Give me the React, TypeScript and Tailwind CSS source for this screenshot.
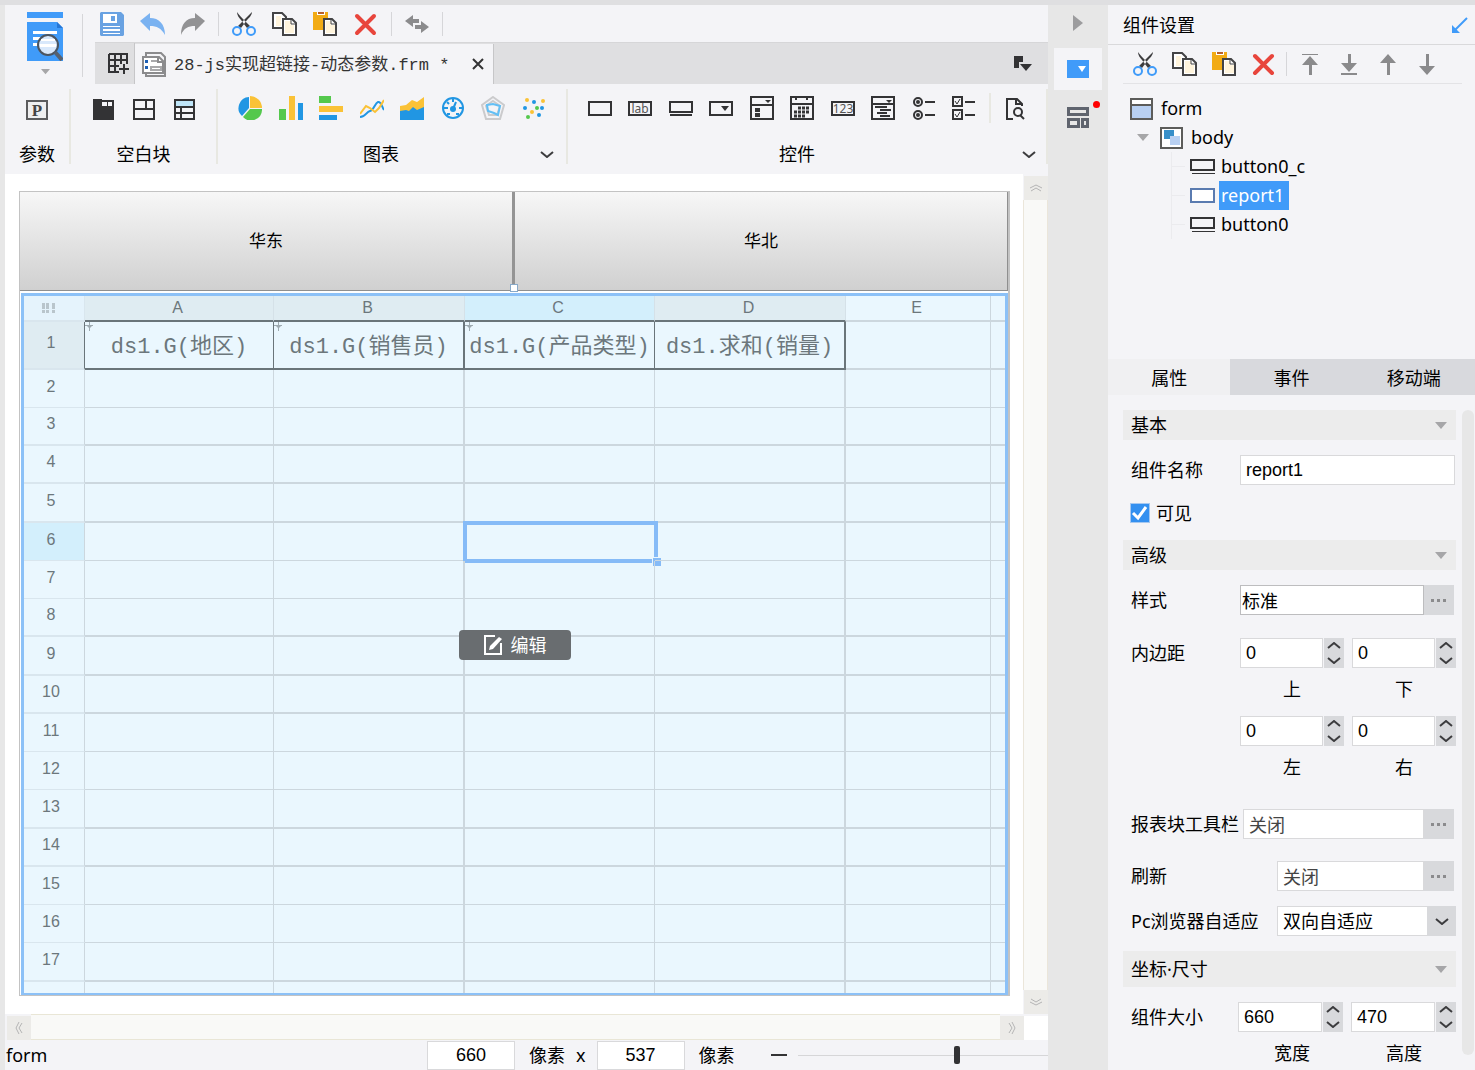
import { useState, type ReactNode } from "react";

const ui = "font-['Noto_Sans','Noto_Sans_CJK_SC',sans-serif]";
const song = "font-['Liberation_Mono','Noto_Sans_CJK_SC',monospace]";
const arial = "font-['Liberation_Sans','Noto_Sans_CJK_SC',sans-serif]";

function Svg({ w = 24, h = 24, children }: { w?: number; h?: number; children: ReactNode }) {
  return (
    <svg width={w} height={h} viewBox={`0 0 ${w} ${h}`} fill="none" className="block shrink-0" aria-hidden="true">
      {children}
    </svg>
  );
}

function IconButton({ label, children }: { label: string; children: ReactNode }) {
  return (
    <button type="button" aria-label={label} className="flex shrink-0 items-center justify-center">
      {children}
    </button>
  );
}

const VLine = ({ className = "" }: { className?: string }) => (
  <div className={`w-px shrink-0 bg-[#d6d6d9] ${className}`} />
);

/* ---------- edit icons ---------- */

const CutIcon = () => (
  <Svg>
    <path d="M5 0c0 3 2 6 4 8l6 8 3-2-5-5C10 6 7 3 5 0ZM20 0c0 3-3 6-5 8l-6 8-3-2 5-5c3-3 6-6 9-9Z" fill="#3c3c3e" />
    <circle cx="5" cy="19" r="4" stroke="#3f9bf9" strokeWidth="2" />
    <circle cx="19" cy="19" r="4" stroke="#3f9bf9" strokeWidth="2" />
  </Svg>
);

const CopyIcon = () => (
  <Svg w={25}>
    <path d="M1 1h9l4 4v11H1Z" fill="#fff" stroke="#444446" strokeWidth="2" />
    <path d="M4 4h5v10H4Z" fill="#fff4dc" />
    <path d="M11 7h9l4 4v12H11Z" fill="#fff" stroke="#444446" strokeWidth="2" />
    <path d="M13 9h6v4h3v8h-9Z" fill="#fff4dc" />
    <path d="M19 7v5h5" stroke="#444446" />
  </Svg>
);

const PasteIcon = () => (
  <Svg>
    <path d="M0 0h15v18H0Z" fill="#f2ab14" />
    <path d="M4 0h8v3H4Z" fill="#fff" />
    <path d="M5 0h6v2H5Z" fill="#b8602a" />
    <path d="M11 7h8l4 4v12H11Z" fill="#fff" stroke="#444446" strokeWidth="2" />
    <path d="M13 9h5v4h4v8h-9Z" fill="#fff4dc" />
    <path d="M18 7v5h5" stroke="#444446" />
  </Svg>
);

const DeleteIcon = () => (
  <Svg w={25}>
    <path d="M4 4l17 17M21 4L4 21" stroke="#e8453c" strokeWidth="4" strokeLinecap="round" />
  </Svg>
);

const Chevron = ({ up = false }: { up?: boolean }) => (
  <Svg w={14} h={7}>
    <path d={up ? "M1 6l6-5 6 5" : "M1 1l6 5 6-5"} stroke="#3c3c3e" strokeWidth="2" />
  </Svg>
);

const Caret = ({ w = 12 }: { w?: number }) => (
  <svg width={w} height="7" viewBox="0 0 12 7" className="block shrink-0" aria-hidden="true">
    <path d="M0 0h12L6 7Z" fill="#a6a6a8" />
  </svg>
);

/* ---------- header ---------- */

function Logo() {
  return (
    <div className="flex w-[90px] shrink-0 items-start">
      <button type="button" aria-label="模板" className="ml-[22px] mt-[7px] flex flex-col items-center gap-[7px]">
        <Svg w={36} h={49}>
          <path d="M0 0h36v6H0ZM0 10h30l6 6v33H0Z" fill="#409bf9" />
          <path d="M30 10l6 6h-6Z" fill="#2677d6" />
          <path d="M6 19h24v3H6ZM6 25h8v3H6ZM6 31h5v3H6Z" fill="#fff" />
          <circle cx="21" cy="33" r="10" fill="#d8e8fb" stroke="#4c5560" strokeWidth="2" />
          <path d="M14 27h14v2H14ZM13 32h16v3H13Z" fill="#fff" />
          <path d="M28 40l7 8" stroke="#566170" strokeWidth="4" />
        </Svg>
        <Caret w={9} />
      </button>
      <VLine className="ml-[19px] mt-[9px] h-[63px]" />
    </div>
  );
}

function EditBar() {
  return (
    <div className="flex h-[37px] items-center pl-[5px]">
      <div className="flex items-center gap-4">
        <IconButton label="保存">
          <Svg>
            <path d="M1 0h20l3 3v20l-1 1H1l-1-1V1Z" fill="#69a2e2" />
            <path d="M3 2h14v9H3ZM3 14h17v1H3ZM3 17h17v2H3ZM3 21h17v1H3Z" fill="#fff" />
            <path d="M11 4h4v5h-4Z" fill="#69a2e2" />
          </Svg>
        </IconButton>
        <IconButton label="撤销">
          <Svg w={25}>
            <path d="M0 9L10 1v5c9 0 15 6 15 17-4-7-8-9-15-9v5Z" fill="#7ab2f1" />
          </Svg>
        </IconButton>
        <IconButton label="重做">
          <Svg>
            <path d="M24 9L14 1v5C5 6 0 12 0 23c3-7 7-9 14-9v5Z" fill="#929294" />
          </Svg>
        </IconButton>
      </div>
      <VLine className="mx-[13px] h-6" />
      <div className="flex items-center gap-4">
        <IconButton label="剪切"><CutIcon /></IconButton>
        <IconButton label="复制"><CopyIcon /></IconButton>
        <IconButton label="粘贴"><PasteIcon /></IconButton>
        <IconButton label="删除"><DeleteIcon /></IconButton>
      </div>
      <VLine className="mx-[13px] h-6" />
      <IconButton label="切换">
        <Svg>
          <path d="M0 9l8-6v4h6v4H8v4Z" fill="#8b8b8d" />
          <path d="M24 15l-8-6v4h-6v4h6v4Z" fill="#8b8b8d" />
        </Svg>
      </IconButton>
      <VLine className="ml-[13px] h-6" />
    </div>
  );
}

function FileTabs() {
  return (
    <div className="flex h-[42px] items-stretch border-t border-[#d6d6d8] bg-[#dfdfe1]">
      <button type="button" aria-label="新建" className="flex w-10 items-center justify-end border-r border-[#c6c6c8] pr-1">
        <Svg w={22} h={22}>
          <path d="M1 1h18v10M1 1v18h10M1 7h18M1 13h10M7 1v18M13 1v10M11 16h10M16 11v10" stroke="#333335" strokeWidth="2" />
        </Svg>
      </button>
      <div className="mt-px flex w-[359px] items-center border-r border-[#c6c6c8] bg-[#f4f4f7] pl-[7px]">
        <Svg w={24} h={25}>
          <path d="M4 1h15l4 4v19H4Z" fill="#f4f4f7" stroke="#8b8b8d" strokeWidth="2" />
          <path d="M1 5h16l4 4v12H1Z" fill="#fff" stroke="#8b8b8d" strokeWidth="2" />
          <path d="M3 8h3v3H3ZM3 14h3v3H3Z" fill="#1d5fb4" />
          <path d="M9 9h6M9 15h10v3H9Z" stroke="#a8a8aa" strokeWidth="2" />
          <path d="M16 4v6h6" stroke="#8b8b8d" strokeWidth="2" />
        </Svg>
        <span className={`ml-2 whitespace-pre pt-[3px] text-[17px] text-[#333] ${song}`}>28-js实现超链接-动态参数.frm *</span>
        <button type="button" aria-label="关闭标签" className="ml-auto mr-[9px]">
          <Svg w={12} h={12}>
            <path d="M1 1l10 10M11 1L1 11" stroke="#333335" strokeWidth="2" />
          </Svg>
        </button>
      </div>
      <button type="button" aria-label="标签列表" className="ml-auto mr-4 flex items-center">
        <Svg w={18} h={15}>
          <path d="M0 0h9v6H5v6H0Z" fill="#333335" />
          <path d="M6 8h12l-6 7Z" fill="#333335" />
        </Svg>
      </button>
    </div>
  );
}

/* ---------- ribbon ---------- */

const blockIcons = [
  {
    name: "Tab块",
    icon: <path d="M2 3h9v1h12v20H2ZM11 6v4h5V6ZM17 6v4h4V6Z" fill="#333335" fillRule="evenodd" />,
  },
  {
    name: "绝对画布块",
    icon: <path d="M2 4h20v19H2ZM2 13h20M14 4v9" stroke="#333335" strokeWidth="2" />,
  },
  {
    name: "报表块",
    icon: (
      <>
        <path d="M3 4h19v6H3Z" fill="#bfe5f8" />
        <path d="M3 4h19v19H3ZM3 11h19M3 17h19M9 11v12" stroke="#333335" strokeWidth="2" />
      </>
    ),
  },
];

const chartIcons = [
  {
    name: "饼图",
    icon: (
      <>
        <path d="M11 12V1A11 11 0 0 0 4 20Z" fill="#2196e3" />
        <path d="M12 12V0a12 12 0 0 1 12 12Z" fill="#fac237" />
        <path d="M12 13h12A11 11 0 0 1 5 21Z" fill="#54c84d" />
      </>
    ),
  },
  {
    name: "柱形图",
    icon: (
      <>
        <path d="M0 13h7v12H0Z" fill="#54c84d" />
        <path d="M10 0h6v24h-6Z" fill="#fac237" />
        <path d="M19 7h5v17h-5Z" fill="#2196e3" />
      </>
    ),
  },
  {
    name: "条形图",
    icon: (
      <>
        <path d="M0 0h12v7H0Z" fill="#54c84d" />
        <path d="M0 10h24v6H0Z" fill="#fac237" />
        <path d="M0 19h18v5H0Z" fill="#2196e3" />
      </>
    ),
  },
  {
    name: "折线图",
    icon: (
      <>
        <path d="M0 21c6 0 6-5 10-6s5-8 8-9 4 5 6 8" stroke="#2196e3" strokeWidth="2" />
        <path d="M0 18l6-8 4 2 5 4 4-4 5-8" stroke="#fac237" strokeWidth="2" />
      </>
    ),
  },
  {
    name: "面积图",
    icon: (
      <>
        <path d="M0 10l6-1 6-5 5 2 7-5v16H0Z" fill="#fac237" />
        <path d="M0 15l6-1 3 1 4-4 4 3 7-3v13H0Z" fill="#2196e3" />
      </>
    ),
  },
  {
    name: "仪表盘",
    icon: (
      <>
        <circle cx="12" cy="12" r="10" stroke="#2196e3" strokeWidth="2" />
        <path d="M12 3v3M3 12h4M18 12h3M6 6l2 2M6 18h3M18 18h-3" stroke="#2196e3" strokeWidth="2" />
        <circle cx="12" cy="13" r="3" fill="#2196e3" />
        <path d="M12 13l3-7" stroke="#2196e3" strokeWidth="2" />
      </>
    ),
  },
  {
    name: "雷达图",
    icon: (
      <>
        <path d="M12 1l11 8-4 14H5L1 9ZM12 5l7 5-3 9H8L5 10Z" stroke="#cbcbcd" strokeWidth="2" />
        <path d="M6 9l6-1 7 2-2 9-4-2-6-2Z" stroke="#62bff5" strokeWidth="2" />
      </>
    ),
  },
  {
    name: "散点图",
    icon: (
      <>
        <g fill="#fac237">
          <circle cx="5" cy="4" r="2" />
          <circle cx="21" cy="5" r="2" />
          <circle cx="10" cy="16" r="2" />
        </g>
        <g fill="#2196e3">
          <circle cx="12" cy="6" r="2" />
          <circle cx="3" cy="12" r="2" />
          <circle cx="20" cy="12" r="2" />
          <circle cx="17" cy="19" r="2" />
        </g>
        <g fill="#54c84d">
          <circle cx="15" cy="12" r="2" />
          <circle cx="6" cy="21" r="2" />
        </g>
      </>
    ),
  },
];

const dark = { stroke: "#333335", strokeWidth: 2 };

const widgetIcons = [
  { name: "文本", icon: <path d="M1 6h22v13H1Z" {...dark} /> },
  {
    name: "标签",
    icon: (
      <>
        <path d="M1 6h22v13H1Z" {...dark} />
        <text x="12" y="17" textAnchor="middle" fontSize="12" fontFamily="Noto Sans" fill="#555">lab</text>
      </>
    ),
  },
  { name: "按钮", icon: <path d="M1 6h22v10H1ZM1 19h22" {...dark} /> },
  {
    name: "下拉框",
    icon: (
      <>
        <path d="M1 6h22v13H1Z" {...dark} />
        <path d="M12 10h8l-4 5Z" fill="#333335" />
      </>
    ),
  },
  {
    name: "下拉复选框",
    icon: (
      <>
        <path d="M1 1h22v22H1ZM1 9h22M6 13h3v2H6ZM6 18h3v2H6Z" {...dark} />
        <path d="M15 4h6l-3 3Z" fill="#333335" />
      </>
    ),
  },
  {
    name: "日期",
    icon: (
      <>
        <path d="M1 1h22v22H1ZM1 8h22M6 1v3M17 1v3" {...dark} />
        <path d="M8 12h12M4 16h16M4 20h12" stroke="#333335" strokeWidth="3" strokeDasharray="3 1" />
      </>
    ),
  },
  {
    name: "数字",
    icon: (
      <>
        <path d="M1 6h22v13H1Z" {...dark} />
        <text x="12" y="17" textAnchor="middle" fontSize="12" fontFamily="Noto Sans" fill="#555">123</text>
      </>
    ),
  },
  {
    name: "下拉树",
    icon: (
      <>
        <path d="M1 1h22v22H1ZM1 8h22M4 11h12M9 14h11M6 17h10M9 20h10" {...dark} />
        <path d="M15 4h6l-3 3Z" fill="#333335" />
      </>
    ),
  },
  {
    name: "单选按钮组",
    icon: (
      <>
        <path d="M13 6h10M13 19h10" {...dark} />
        <circle cx="6" cy="6" r="4" {...dark} />
        <circle cx="6" cy="19" r="4" {...dark} />
        <circle cx="6" cy="6" r="2" fill="#333335" />
        <circle cx="6" cy="19" r="2" fill="#333335" />
      </>
    ),
  },
  {
    name: "复选框组",
    icon: (
      <>
        <path d="M1 1h9v9H1ZM1 14h9v9H1ZM13 6h10M13 19h10" {...dark} />
        <path d="M3 5l2 3 3-5M3 18l2 3 3-5" stroke="#333335" />
      </>
    ),
  },
];

function IconRow({ items }: { items: { name: string; icon: ReactNode }[] }) {
  return (
    <div className="flex h-6 justify-between">
      {items.map((item) => (
        <IconButton key={item.name} label={item.name}>
          <Svg>{item.icon}</Svg>
        </IconButton>
      ))}
    </div>
  );
}

const GroupLine = () => <div className="mt-[5px] h-[75px] w-[2px] shrink-0 bg-[#e8e8e2]" />;

function Ribbon() {
  return (
    <div className="flex h-[90px] shrink-0 text-lg leading-6 text-black">
      <div className="flex w-16 shrink-0 flex-col items-center gap-[22px] pt-3">
        <IconButton label="参数面板">
          <Svg w={22}>
            <path d="M1 5h20v18H1Z" fill="#efeff0" stroke="#5c5c5e" strokeWidth="2" />
            <text x="11" y="20" textAnchor="middle" fontSize="17" fontWeight="bold" fontFamily="Liberation Serif" fill="#444">P</text>
          </Svg>
        </IconButton>
        <span>参数</span>
      </div>
      <GroupLine />
      <div className="flex w-[145px] shrink-0 flex-col gap-[22px] px-5 pt-3">
        <IconRow items={blockIcons} />
        <span className="text-center">空白块</span>
      </div>
      <GroupLine />
      <div className="flex w-[348px] shrink-0 flex-col gap-[22px] px-5 pt-3">
        <IconRow items={chartIcons} />
        <div className="flex items-center">
          <span className="flex-1 pr-4 text-center">图表</span>
          <button type="button" aria-label="更多图表" className="-mr-2"><Chevron /></button>
        </div>
      </div>
      <GroupLine />
      <div className="flex flex-1 flex-col gap-[22px] pl-5 pr-[10px] pt-3">
        <div className="flex">
          <div className="w-[388px]">
            <IconRow items={widgetIcons} />
          </div>
          <div className="mx-[13px] -my-[3px] h-[30px] w-[2px] bg-[#e8e8e2]" />
          <IconButton label="预览">
            <Svg>
              <path d="M9 23H3V3h10l5 5v2M12 3v5h6" {...dark} />
              <circle cx="14" cy="16" r="4" {...dark} />
              <path d="M16 19l4 4" {...dark} />
            </Svg>
          </IconButton>
        </div>
        <div className="flex items-center">
          <span className="flex-1 pr-4 text-center">控件</span>
          <button type="button" aria-label="更多控件"><Chevron /></button>
        </div>
      </div>
      <GroupLine />
    </div>
  );
}

/* ---------- design canvas ---------- */

const formulas = ["ds1.G(地区)", "ds1.G(销售员)", "ds1.G(产品类型)", "ds1.求和(销量)"];
const rows = Array.from({ length: 16 }, (_, i) => i + 2);
const thickRows = [3, 4, 5, 8, 9, 10, 13, 14, 17];
const cols = ["A", "B", "C", "D", "E"];

function ReportGrid() {
  return (
    <table className={`w-full table-fixed border-separate border-spacing-0 bg-[#eaf7fe] text-base leading-5 text-[#6c777c] ${arial}`}>
      <colgroup>
        <col className="w-[61px]" />
        <col className="w-[189px]" />
        <col className="w-[191px]" />
        <col className="w-[190px]" />
        <col className="w-[191px]" />
        <col className="w-[145px]" />
        <col />
      </colgroup>
      <thead>
        <tr className="h-[26px]">
          <td className="border-b-2 border-r border-[#d9e6ee] bg-[#e5f3fc] p-0">
            <div className="flex justify-center pr-3">
              <Svg w={13} h={10}>
                <path d="M0 0h3v6H0ZM4 0h3v6H4ZM10 0h3v6h-3ZM0 7h3v3H0ZM4 7h3v3H4ZM10 7h3v3h-3Z" fill="#b9c5cc" />
              </Svg>
            </div>
          </td>
          {cols.map((c) => (
            <th
              key={c}
              scope="col"
              className={`border-b-2 border-r p-0 pr-[3px] font-normal ${
                c === "E" ? "border-[#ccd7de]" : "border-b-[#6a757a] border-r-[#d5e1e8]"
              } ${c === "C" ? "bg-[#d3effc]" : c === "E" ? "bg-[#eaf7fe]" : "bg-[#dfecf2]"}`}
            >
              {c}
            </th>
          ))}
          <td className="border-b-2 border-[#ccd7de] p-0" />
        </tr>
      </thead>
      <tbody>
        <tr className="h-12">
          <th scope="row" className="border-b-2 border-r border-b-[#d9e6ee] border-r-[#6a757a] bg-[#dfecf2] p-0 pb-1 pr-[6px] font-normal">
            1
          </th>
          {formulas.map((f, i) => (
            <td
              key={f}
              className={`relative border-b-2 border-[#6a757a] p-0 pt-[5px] text-center ${i % 2 ? "border-r-2" : "border-r"}`}
            >
              {i < 3 && (
                <span className="absolute left-0 top-0">
                  <Svg w={9} h={9}>
                    <path d="M4 0h1v3h3v1H7L5 6v3H4V6L2 4H0V3h4Z" fill="#9fabb1" />
                  </Svg>
                </span>
              )}
              <span className={`whitespace-nowrap text-[22px] leading-[30px] ${song}`}>{f}</span>
            </td>
          ))}
          <td className="border-b-2 border-r border-[#ccd7de] p-0" />
          <td className="border-b-2 border-[#ccd7de] p-0" />
        </tr>
        {rows.map((n) => {
          const line = thickRows.includes(n) ? "border-b-2" : "border-b";
          return (
            <tr key={n} className={n % 4 === 1 ? "h-[39px]" : "h-[38px]"}>
              <th
                scope="row"
                className={`border-r border-b-[#d9e6ee] border-r-[#ccd7de] p-0 pb-1 pr-[6px] font-normal ${line} ${n === 6 ? "bg-[#d3effc]" : ""}`}
              >
                {n}
              </th>
              {cols.map((c) => (
                <td key={c} className={`relative border-[#ccd7de] p-0 ${line} ${c === "B" || c === "D" ? "border-r-2" : "border-r"}`}>
                  {c === "C" && n === 6 && (
                    <div className="absolute -bottom-[3px] -left-[2px] -right-[4px] -top-[2px] border-4 border-[#86bbf7]">
                      <div className="absolute -bottom-[7px] -right-[7px] box-content h-2 w-2 border-l border-t border-[#eaf7fe] bg-[#86bbf7]" />
                    </div>
                  )}
                </td>
              ))}
              <td className={`border-[#ccd7de] p-0 ${line}`} />
            </tr>
          );
        })}
        <tr className="h-[11px]">
          <td className="border-r border-[#ccd7de] p-0" />
          {cols.map((c) => (
            <td key={c} className={`border-[#ccd7de] p-0 ${c === "B" || c === "D" ? "border-r-2" : "border-r"}`} />
          ))}
          <td className="p-0" />
        </tr>
      </tbody>
    </table>
  );
}

function Canvas() {
  const face = "flex flex-1 items-center justify-center bg-linear-to-b from-[#f7f7f7] to-[#d0d0d0] pt-1";
  return (
    <div className="min-w-0 flex-1 overflow-hidden bg-white py-[17px] pl-[14px] pr-[13px]">
      <div className="border border-r-2 border-[#c3c3c3]">
        <div className={`relative flex h-[99px] border-b border-r border-[#8f8f8f] text-[17px] text-black ${song}`}>
          <button type="button" className={`${face} border-r-[3px] border-[#949494]`}>华东</button>
          <button type="button" className={face}>华北</button>
          <span className="absolute -bottom-[2px] left-1/2 h-2 w-2 -translate-x-1/2 border border-[#88a9c8] bg-white" />
        </div>
        <div className="relative mt-[2px] ml-px border-[3px] border-b-2 border-[#8cc1f7]">
          <ReportGrid />
          <button
            type="button"
            className="absolute left-1/2 top-1/2 flex h-[30px] w-28 -translate-x-1/2 -translate-y-1/2 items-center justify-center gap-2 rounded-sm bg-[#696d70] text-lg text-white"
          >
            <Svg w={20} h={22}>
              <path d="M12 2H2v18h16V9" stroke="#fff" strokeWidth="2" />
              <path d="M6 16l1-4 9-9 3 2-9 10Z" fill="#fff" />
            </Svg>
            编辑
          </button>
        </div>
      </div>
    </div>
  );
}

const ScrollButton = ({ label, turn }: { label: string; turn: string }) => (
  <button type="button" aria-label={label} className="flex h-6 w-6 shrink-0 items-center justify-center bg-[#ecebe8]">
    <span className={turn}>
      <Svg w={14} h={8}>
        <path d="M1 4l6-3 6 3M2 7l5-3 5 3" stroke="#b4b4b4" />
      </Svg>
    </span>
  </button>
);

const sizeInput = `h-[29px] w-[88px] border border-[#d9d9db] bg-white text-center text-lg text-black ${arial}`;

function StatusBar() {
  return (
    <div className="flex h-[30px] shrink-0 items-center text-lg text-black">
      <span className="w-[422px] shrink-0 pl-px">form</span>
      <input aria-label="画布宽度" defaultValue="660" className={sizeInput} />
      <span className="ml-[14px]">像素</span>
      <span className="mx-[11px]">x</span>
      <input aria-label="画布高度" defaultValue="537" className={sizeInput} />
      <span className="ml-[14px]">像素</span>
      <button type="button" aria-label="缩小" className="ml-9 mr-[11px]">
        <Svg w={16} h={2}>
          <path d="M0 0h16v2H0Z" fill="#333335" />
        </Svg>
      </button>
      <input
        type="range"
        aria-label="缩放"
        min={0}
        max={100}
        defaultValue={64}
        className="h-px min-w-0 flex-1 appearance-none bg-[#d6d6d8] [&::-webkit-slider-thumb]:h-[18px] [&::-webkit-slider-thumb]:w-[6px] [&::-webkit-slider-thumb]:appearance-none [&::-webkit-slider-thumb]:rounded-[2px] [&::-webkit-slider-thumb]:bg-[#333335]"
      />
    </div>
  );
}

function SideRail() {
  return (
    <div className="flex w-[60px] shrink-0 flex-col items-center bg-[#e7e7e7]">
      <button type="button" aria-label="收起面板" className="mt-[10px]">
        <Svg w={10} h={16}>
          <path d="M0 0l10 8-10 8Z" fill="#9c9c9e" />
        </Svg>
      </button>
      <button type="button" aria-label="组件设置面板" className="mt-[17px] flex h-[42px] w-12 items-center justify-center bg-[#f4f4f7]">
        <Svg w={22} h={18}>
          <path d="M0 0h22v18H0Z" fill="#409bf9" />
          <path d="M11 6h8l-4 6Z" fill="#fff" />
        </Svg>
      </button>
      <button type="button" aria-label="组件库" className="relative mt-[17px]">
        <Svg w={22} h={21}>
          <path
            d="M0 0h22v9H0ZM3 3v3h16V3ZM0 11h13v10H0ZM3 14v4h7v-4ZM14 11h8v10h-8ZM17 14v4h2v-4Z"
            fill="#5f646e"
            fillRule="evenodd"
          />
        </Svg>
        <span className="absolute -right-[11px] -top-[6px] h-[7px] w-[7px] rounded-full bg-[#fe0000]" />
      </button>
    </div>
  );
}

/* ---------- settings panel ---------- */

const moveIcons = [
  { name: "置于顶层", d: "M4 2h16v1H4ZM12 4l8 9h-6v10h-3V13H4Z" },
  { name: "置于底层", d: "M4 21h16v2H4ZM12 20l8-9h-6V2h-3v9H4Z" },
  { name: "上移一层", d: "M12 2l8 9h-6v12h-3V11H4Z" },
  { name: "下移一层", d: "M12 23l8-9h-6V2h-3v12H4Z" },
];

const ButtonGlyph = () => (
  <Svg w={25} h={16}>
    <path d="M1 1h23v10H1Z" stroke="#333335" strokeWidth="2" />
    <path d="M2 14h23v1H2Z" fill="#333335" />
  </Svg>
);

const ReportGlyph = () => (
  <Svg w={25} h={16}>
    <path d="M1 1h23v13H1Z" fill="#fff" stroke="#5a7bb0" strokeWidth="2" />
  </Svg>
);

const leaves = [
  { id: "button0_c", icon: <ButtonGlyph /> },
  { id: "report1", icon: <ReportGlyph /> },
  { id: "button0", icon: <ButtonGlyph /> },
];

function ComponentTree() {
  const [selected, setSelected] = useState("report1");
  return (
    <ul className="h-[275px] pt-[10px] text-lg leading-[29px] text-black">
      <li className="pl-[22px]">
        <button type="button" className="flex h-[29px] items-center gap-2">
          <Svg w={23} h={22}>
            <path d="M1 1h21v20H1Z" fill="#b8d0f2" stroke="#5c5c5a" strokeWidth="2" />
            <path d="M2 2h19v4H2Z" fill="#fff" />
            <path d="M1 7h21" stroke="#5c5c5a" strokeWidth="2" />
          </Svg>
          form
        </button>
        <ul>
          <li className="pl-[7px]">
            <button type="button" className="flex h-[29px] items-center">
              <Caret />
              <span className="ml-[11px] mr-2">
                <Svg w={23} h={22}>
                  <path d="M1 1h21v20H1Z" fill="#fff" stroke="#5c5c5a" strokeWidth="2" />
                  <path d="M4 3h10v9H4Z" fill="#378fc9" />
                  <path d="M10 9h10v9H10Z" fill="#b8d0f2" />
                </Svg>
              </span>
              body
            </button>
            <ul className="ml-[34px] border-l border-[#ebebee]">
              {leaves.map((leaf) => (
                <li key={leaf.id} className="flex items-center">
                  <span className="mr-[5px] h-px w-[13px] bg-[#ebebee]" />
                  <button type="button" onClick={() => setSelected(leaf.id)} className="flex h-[29px] items-center gap-1">
                    {leaf.icon}
                    <span className={`px-[2px] ${selected === leaf.id ? "bg-[#409bf9] pr-[5px] text-white" : ""}`}>{leaf.id}</span>
                  </button>
                </li>
              ))}
            </ul>
          </li>
        </ul>
      </li>
    </ul>
  );
}

const field = "h-[30px] min-w-0 border border-[#d9d9db] bg-white px-[5px] text-lg";

function SectionTitle({ title, tall = false }: { title: string; tall?: boolean }) {
  return (
    <h3 className={`flex items-center justify-between bg-[#ececec] pl-2 pr-[9px] ${tall ? "h-9" : "h-[30px]"}`}>
      <span>{title}</span>
      <Caret />
    </h3>
  );
}

function Stepper({ id, label, value }: { id: string; label: string; value: string }) {
  return (
    <div className="flex min-w-0 flex-1">
      <input id={id} aria-label={label} defaultValue={value} className={`${field} flex-1 ${arial}`} />
      <div className="ml-px flex w-5 shrink-0 flex-col items-center justify-between bg-[#d8d9dc] py-1">
        <button type="button" aria-label={`${label}增加`}><Chevron up /></button>
        <button type="button" aria-label={`${label}减少`}><Chevron /></button>
      </div>
    </div>
  );
}

function MoreButton({ label }: { label: string }) {
  return (
    <button type="button" aria-label={label} className="flex h-[30px] w-[30px] shrink-0 items-center justify-center bg-[#d8d9dc]">
      <Svg w={16} h={3}>
        <path d="M0 0h3v3H0ZM6 0h3v3H6ZM12 0h3v3h-3Z" fill="#8b8b8d" />
      </Svg>
    </button>
  );
}

function Captions({ items }: { items: string[] }) {
  return (
    <div className="flex gap-2 pl-[117px] pt-2 leading-[27px]">
      {items.map((t) => (
        <span key={t} className="flex-1 text-center">{t}</span>
      ))}
    </div>
  );
}

function Properties() {
  return (
    <div className="flex flex-1 pl-[15px] pt-[15px] text-lg leading-6 text-black">
      <div className="min-w-0 flex-1">
        <SectionTitle title="基本" />
        <div className="mt-[15px] flex items-center pl-2 pr-px">
          <label htmlFor="name" className="w-[109px] shrink-0">组件名称</label>
          <input id="name" defaultValue="report1" className={`${field} flex-1 ${arial}`} />
        </div>
        <label className="mt-[16px] flex h-6 items-center gap-[6px] pl-[7px]">
          <span className="relative h-5 w-5">
            <input type="checkbox" defaultChecked className="peer block h-5 w-5 appearance-none border border-[#a6c8f0] bg-white checked:bg-[#3390f0]" />
            <svg viewBox="0 0 20 20" fill="none" className="pointer-events-none absolute inset-0 hidden peer-checked:block" aria-hidden="true">
              <path d="M3 10l5 5 8-11" stroke="#fff" strokeWidth="3" />
            </svg>
          </span>
          可见
        </label>
        <div className="mt-[15px]">
          <SectionTitle title="高级" />
        </div>
        <div className="mt-[15px] flex items-center pl-2 pr-[2px]">
          <label htmlFor="style" className="w-[109px] shrink-0">样式</label>
          <input id="style" defaultValue="标准" className={`h-[30px] min-w-0 flex-1 border border-[#bdbdbf] bg-white px-px ${ui}`} />
          <MoreButton label="选择样式" />
        </div>
        <div className="mt-[23px] flex items-center pl-2">
          <span className="w-[109px] shrink-0">内边距</span>
          <div className="flex min-w-0 flex-1 gap-2">
            <Stepper id="pad-top" label="上" value="0" />
            <Stepper id="pad-bottom" label="下" value="0" />
          </div>
        </div>
        <Captions items={["上", "下"]} />
        <div className="mt-[13px] flex gap-2 pl-[117px]">
          <Stepper id="pad-left" label="左" value="0" />
          <Stepper id="pad-right" label="右" value="0" />
        </div>
        <Captions items={["左", "右"]} />
        <div className="mt-7 flex items-center pl-2 pr-[2px]">
          <label htmlFor="toolbar" className="w-28 shrink-0">报表块工具栏</label>
          <input id="toolbar" defaultValue="关闭" className={`${field} flex-1 text-[#444] ${song}`} />
          <MoreButton label="设置工具栏" />
        </div>
        <div className="mt-[22px] flex items-center pl-2 pr-[2px]">
          <label htmlFor="refresh" className="w-[146px] shrink-0">刷新</label>
          <input id="refresh" defaultValue="关闭" className={`${field} flex-1 text-[#444] ${song}`} />
          <MoreButton label="设置刷新" />
        </div>
        <div className="mt-[15px] flex items-center pl-2">
          <label htmlFor="fit" className="w-[146px] shrink-0">Pc浏览器自适应</label>
          <div className="relative min-w-0 flex-1">
            <select id="fit" className={`${field} w-full appearance-none ${ui}`}>
              <option>双向自适应</option>
              <option>横向自适应</option>
            </select>
            <span className="pointer-events-none absolute inset-y-0 right-0 flex w-[29px] items-center justify-center bg-[#d8d9dc]">
              <Chevron />
            </span>
          </div>
        </div>
        <div className="mt-[15px]">
          <SectionTitle title="坐标·尺寸" tall />
        </div>
        <div className="mt-[15px] flex items-center pl-2">
          <span className="w-[107px] shrink-0">组件大小</span>
          <div className="flex min-w-0 flex-1 gap-2">
            <Stepper id="width" label="宽度" value="660" />
            <Stepper id="height" label="高度" value="470" />
          </div>
        </div>
        <Captions items={["宽度", "高度"]} />
      </div>
      <div className="mb-[15px] ml-[6px] mr-px w-3 shrink-0 rounded-md bg-[#e7e7e7]" />
    </div>
  );
}

const tabs = ["属性", "事件", "移动端"];

function SettingsPanel() {
  const [tab, setTab] = useState("属性");
  return (
    <aside className="flex w-[367px] shrink-0 flex-col bg-[#f4f4f7]">
      <div className="flex h-10 shrink-0 items-center justify-between border-b border-[#d9d9db] pl-[15px] pr-[7px] text-lg text-black">
        <h2>组件设置</h2>
        <IconButton label="停靠">
          <Svg w={16} h={16}>
            <path d="M0 8l8 8H0Z" fill="#409bf9" />
            <path d="M3 13L15 1" stroke="#409bf9" strokeWidth="2" />
          </Svg>
        </IconButton>
      </div>
      <div className="mr-[13px] ml-[15px] flex h-[39px] shrink-0 items-center border-b border-[#e3e3e6] pl-[10px]">
        <div className="flex gap-[15px]">
          <IconButton label="剪切组件"><CutIcon /></IconButton>
          <IconButton label="复制组件"><CopyIcon /></IconButton>
          <IconButton label="粘贴组件"><PasteIcon /></IconButton>
          <IconButton label="删除组件"><DeleteIcon /></IconButton>
        </div>
        <VLine className="mr-[11px] ml-[10px] h-6" />
        <div className="flex gap-[15px]">
          {moveIcons.map((m) => (
            <IconButton key={m.name} label={m.name}>
              <Svg>
                <path d={m.d} fill="#8a8a8c" />
              </Svg>
            </IconButton>
          ))}
        </div>
      </div>
      <ComponentTree />
      <div role="tablist" className="grid h-9 shrink-0 grid-cols-3 text-lg text-black">
        {tabs.map((t) => (
          <button
            key={t}
            type="button"
            role="tab"
            aria-selected={tab === t}
            onClick={() => setTab(t)}
            className={`pt-[2px] ${tab === t ? "bg-[#f0f0f2]" : "bg-[#d8d9dd]"}`}
          >
            {t}
          </button>
        ))}
      </div>
      <Properties />
    </aside>
  );
}

export default function App() {
  return (
    <div className={`flex h-screen flex-col overflow-hidden border-t-[5px] border-[#dfdfe1] bg-[#f4f4f7] ${ui}`}>
      <div className="flex min-h-0 flex-1 border-l-[5px] border-[#e7e7e7]">
        <main className="flex min-w-0 flex-1 flex-col">
          <header className="flex shrink-0">
            <Logo />
            <div className="min-w-0 flex-1">
              <EditBar />
              <FileTabs />
            </div>
          </header>
          <Ribbon />
          <div className="flex min-h-0 flex-1">
            <Canvas />
            <div className="flex w-[25px] shrink-0 flex-col items-end pt-[2px]">
              <ScrollButton label="向上滚动" turn="" />
              <div className="w-full flex-1 border-x border-[#ebe6da] bg-[#f9f9f7]" />
              <ScrollButton label="向下滚动" turn="rotate-180" />
            </div>
          </div>
          <div className="flex h-[26px] shrink-0 items-end pl-[2px]">
            <ScrollButton label="向左滚动" turn="-rotate-90" />
            <div className="h-full flex-1 border-y border-[#e9e6d6] bg-[#f9f9f7]" />
            <ScrollButton label="向右滚动" turn="rotate-90" />
            <div className="h-6 w-6 bg-white" />
          </div>
          <StatusBar />
        </main>
        <SideRail />
        <SettingsPanel />
      </div>
    </div>
  );
}
